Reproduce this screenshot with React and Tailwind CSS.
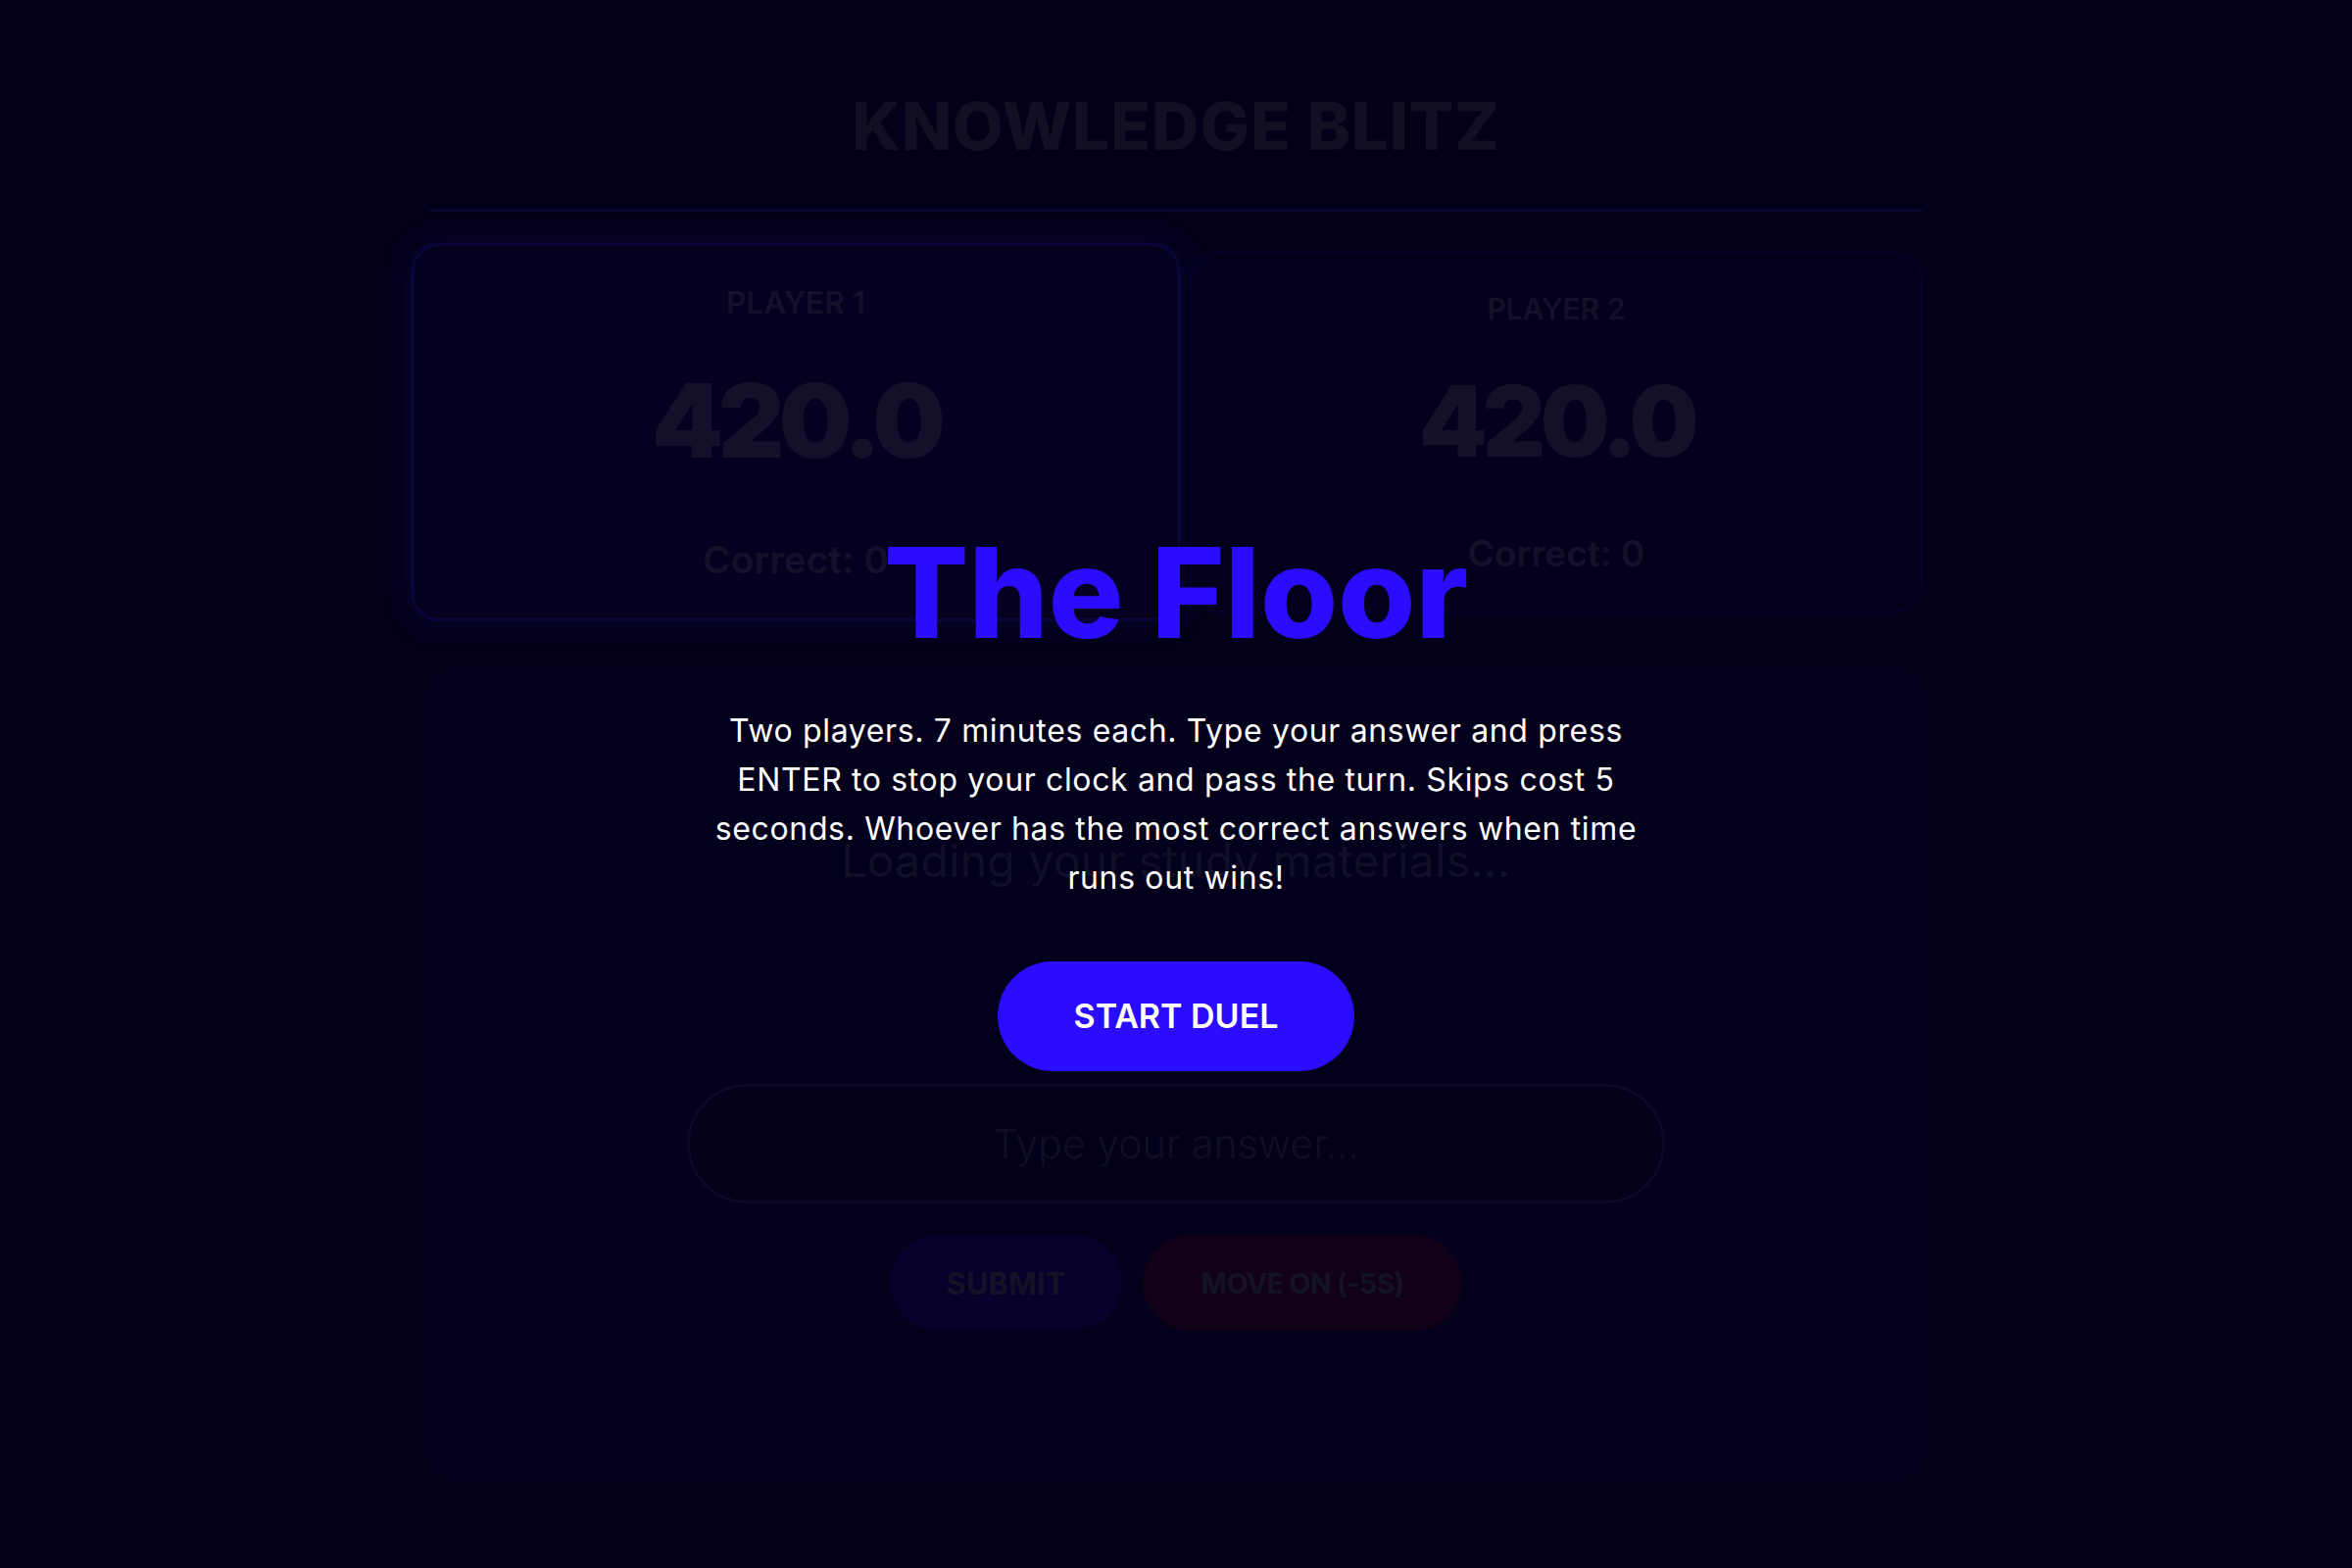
import React from "react";

function PlayerCard({ label, active }) {
  return (
    <div
      className={
        active
          ? "flex h-[368px] scale-[1.05] flex-col items-center rounded-[28px] border-[3px] border-[#0a0538] bg-[#05001f] pt-[40px] shadow-[0_0_24px_rgba(20,8,90,0.35)]"
          : "flex h-[368px] flex-col items-center rounded-[28px] border-2 border-[#060229] bg-[#04001c] pt-[41px]"
      }
    >
      <div className="text-[30px] font-semibold leading-none tracking-[0] text-[#13112a]">{label}</div>
      <div className="mt-[50px] text-[100px] font-black leading-none tracking-[-0.055em] text-[#13112a]">420.0</div>
      <div className="mt-[66px] text-[37px] font-semibold leading-none text-[#13112a]">Correct: 0</div>
    </div>
  );
}

export default function App() {
  return (
    <div className="relative min-h-[1600px] w-full overflow-hidden bg-[#03001a] font-['Inter',sans-serif]">
      {/* Underlying game page (dimmed) */}
      <div className="mx-auto w-[1524px]">
        <header className="border-b-[3px] border-[#080430] pb-[51px] pt-[95px]">
          <h1 className="text-center text-[67px] font-extrabold leading-none tracking-[0.015em] text-[#110f22]">
            KNOWLEDGE BLITZ
          </h1>
        </header>

        <div className="mt-[41px] grid grid-cols-2 gap-[28px]">
          <PlayerCard label="PLAYER 1" active />
          <PlayerCard label="PLAYER 2" />
        </div>

        <section className="mt-[58px] flex h-[826px] flex-col items-center rounded-[30px] border-2 border-[#05011f] bg-[#03001b]">
          <div className="mt-[6px] flex h-[320px] w-[1272px] items-center justify-center rounded-[24px] border-2 border-[#05011f] bg-[#03001c] pt-[54px]">
            <p className="text-[46px] font-normal leading-none tracking-[0.01em] text-[#110f28]">Loading your study materials...</p>
          </div>

          <div className="mt-[95px] flex h-[122px] w-[998px] items-center justify-center rounded-full border-[3px] border-[#0b0828] bg-[#03001a]">
            <span className="text-[41px] font-light leading-none text-[#100e26]">Type your answer...</span>
          </div>

          <div className="mt-[32px] flex gap-[21px]">
            <button className="flex h-[98px] w-[237px] items-center justify-center rounded-full bg-[#07002a] text-[31px] font-bold leading-none text-[#131226]">
              SUBMIT
            </button>
            <button className="flex h-[98px] w-[326px] items-center justify-center rounded-full bg-[#110018] text-[29px] font-bold leading-none tracking-[-0.03em] text-[#131226]">
              MOVE ON (-5S)
            </button>
          </div>
        </section>
      </div>

      {/* Intro overlay */}
      <div className="absolute inset-0 flex flex-col items-center justify-center pt-[34px]">
        <h2 className="text-[128px] font-extrabold leading-none tracking-[0] text-[#2a0dff]">The Floor</h2>
        <p className="mt-[52px] w-[1000px] text-center text-[32px] font-normal leading-[50px] tracking-[0.02em] text-white">
          Two players. 7 minutes each. Type your answer and press ENTER to stop your clock and pass the turn. Skips cost 5 seconds. Whoever has the most correct answers when time runs out wins!
        </p>
        <button className="mt-[60px] flex h-[112px] w-[364px] items-center justify-center rounded-full bg-[#2a0dff] text-[34px] font-semibold leading-none text-white">
          START DUEL
        </button>
      </div>
    </div>
  );
}
